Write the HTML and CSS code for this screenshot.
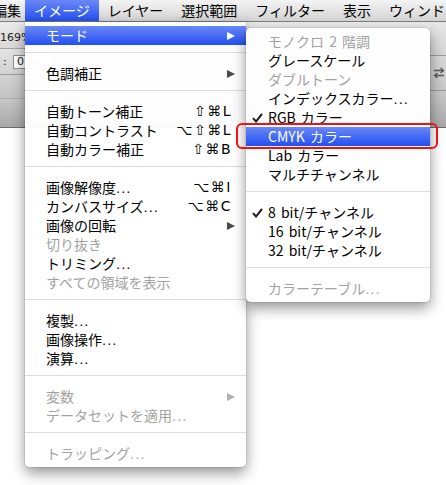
FILE: index.html
```html
<!DOCTYPE html>
<html lang="ja">
<head>
<meta charset="utf-8">
<title>イメージ メニュー</title>
<link rel="stylesheet" href="styles.css">
</head>
<body>
<div class="screen">
  <div class="menubar">
    <span class="mb-item first">編集</span>
    <span class="mb-item active">イメージ</span>
    <span class="mb-item">レイヤー</span>
    <span class="mb-item">選択範囲</span>
    <span class="mb-item">フィルター</span>
    <span class="mb-item">表示</span>
    <span class="mb-item">ウィンドウ</span>
  </div>

  <div class="chrome">
    <div class="chrome-left">
      <div class="appbar"><span class="zoom">169%</span></div>
      <div class="optbar"><span class="colon">:</span><span class="field">0 px</span></div>
      <div class="tabbar"></div>
      <div class="docbar"></div>
    </div>
    <div class="chrome-right">
      <div class="rseg1"></div>
      <div class="rseg2">
        <svg class="swap" width="12" height="12" viewBox="0 0 12 12">
          <path d="M1 3.5H10M7.5 1L10.5 3.5L7.5 6" fill="none" stroke="#5a5a5a" stroke-width="1.3"/>
          <path d="M11 8.5H2M4.5 6L1.5 8.5L4.5 11" fill="none" stroke="#5a5a5a" stroke-width="1.3"/>
        </svg>
      </div>
      <div class="rseg3"></div>
    </div>
  </div>
  <div class="canvas"></div>

  <div class="menu main">
    <div class="item sel"><span class="label">モード</span><span class="arrow"></span></div>
    <div class="sep"></div>
    <div class="item"><span class="label">色調補正</span><span class="arrow"></span></div>
    <div class="sep"></div>
    <div class="item"><span class="label">自動トーン補正</span><span class="key">⇧⌘L</span></div>
    <div class="item"><span class="label">自動コントラスト</span><span class="key">⌥⇧⌘L</span></div>
    <div class="item"><span class="label">自動カラー補正</span><span class="key">⇧⌘B</span></div>
    <div class="sep"></div>
    <div class="item"><span class="label">画像解像度<span class="ell">...</span></span><span class="key">⌥⌘I</span></div>
    <div class="item"><span class="label">カンバスサイズ<span class="ell">...</span></span><span class="key">⌥⌘C</span></div>
    <div class="item"><span class="label">画像の回転</span><span class="arrow"></span></div>
    <div class="item dis"><span class="label">切り抜き</span></div>
    <div class="item"><span class="label">トリミング<span class="ell">...</span></span></div>
    <div class="item dis"><span class="label">すべての領域を表示</span></div>
    <div class="sep"></div>
    <div class="item"><span class="label">複製<span class="ell">...</span></span></div>
    <div class="item"><span class="label">画像操作<span class="ell">...</span></span></div>
    <div class="item"><span class="label">演算<span class="ell">...</span></span></div>
    <div class="sep"></div>
    <div class="item dis"><span class="label">変数</span><span class="arrow"></span></div>
    <div class="item dis"><span class="label">データセットを適用<span class="ell">...</span></span></div>
    <div class="sep"></div>
    <div class="item dis"><span class="label">トラッピング<span class="ell">...</span></span></div>
  </div>

  <div class="menu sub">
    <div class="item dis"><span class="mark"></span><span class="label">モノクロ 2 階調</span></div>
    <div class="item"><span class="mark"></span><span class="label">グレースケール</span></div>
    <div class="item dis"><span class="mark"></span><span class="label">ダブルトーン</span></div>
    <div class="item"><span class="mark"></span><span class="label">インデックスカラー<span class="ell">...</span></span></div>
    <div class="item"><span class="mark"><svg width="11" height="10" viewBox="0 0 11 10"><path d="M1 5.2L4 8.5L10 0.8" fill="none" stroke="#1a1a1a" stroke-width="2"/></svg></span><span class="label">RGB カラー</span></div>
    <div class="item sel"><span class="mark"></span><span class="label">CMYK カラー</span></div>
    <div class="item"><span class="mark"></span><span class="label">Lab カラー</span></div>
    <div class="item"><span class="mark"></span><span class="label">マルチチャンネル</span></div>
    <div class="sep"></div>
    <div class="item"><span class="mark"><svg width="11" height="10" viewBox="0 0 11 10"><path d="M1 5.2L4 8.5L10 0.8" fill="none" stroke="#1a1a1a" stroke-width="2"/></svg></span><span class="label">8 bit/チャンネル</span></div>
    <div class="item"><span class="mark"></span><span class="label">16 bit/チャンネル</span></div>
    <div class="item"><span class="mark"></span><span class="label">32 bit/チャンネル</span></div>
    <div class="sep"></div>
    <div class="item dis"><span class="mark"></span><span class="label">カラーテーブル<span class="ell">...</span></span></div>
  </div>

  <div class="callout"></div>
</div>
</body>
</html>
```

FILE: styles.css
```css
* {
  box-sizing: border-box;
  margin: 0;
  padding: 0;
}

html,
body {
  width: 446px;
  height: 485px;
  overflow: hidden;
  background: #fff;
}

body {
  font-family: "Noto Sans CJK JP", "DejaVu Sans", sans-serif;
  font-size: 14px;
  color: #000;
}

.screen {
  position: relative;
  width: 446px;
  height: 485px;
  overflow: hidden;
  background: #fff;
}

/* ---------- menu bar ---------- */
.menubar {
  display: flex;
  height: 22px;
  margin-left: -16px;
  background: linear-gradient(#f4f4f4, #d3d3d3);
  border-bottom: 1px solid #7c7c7c;
  line-height: 21px;
  white-space: nowrap;
}

.mb-item {
  padding: 0 9px;
}

.mb-item.first {
  padding-right: 4px;
}

.mb-item.active {
  background: linear-gradient(#6a88f7, #2350f1);
  color: #fff;
}

/* ---------- photoshop chrome ---------- */
.chrome {
  display: flex;
  height: 106px;
}

.chrome-left {
  flex: 1;
  display: flex;
  flex-direction: column;
}

.appbar {
  height: 27px;
  padding-top: 3px;
  background: linear-gradient(#ebebeb, #d9d9d9);
  border-bottom: 1px solid #a4a4a4;
  font-family: "DejaVu Sans", sans-serif;
  font-size: 11px;
  line-height: 26px;
  color: #222;
}

.optbar {
  height: 26px;
  display: flex;
  align-items: center;
  padding-left: 3px;
  background: linear-gradient(#e3e3e3, #d3d3d3);
  border-bottom: 1px solid #9e9e9e;
  font-family: "DejaVu Sans", sans-serif;
  font-size: 11px;
  color: #222;
}

.colon {
  width: 10px;
}

.field {
  height: 14px;
  width: 40px;
  background: #fff;
  border: 1px solid #8e8e8e;
  padding-left: 3px;
  line-height: 12px;
}

.tabbar {
  height: 24px;
  background: linear-gradient(#d2d2d2, #c3c3c3);
  border-bottom: 1px solid #adadad;
}

.docbar {
  flex: 1;
  background: linear-gradient(#c7c7c7, #a8a8a8);
  border-bottom: 1px solid #6c6c6c;
}

.chrome-right {
  width: 16px;
  display: flex;
  flex-direction: column;
}

.rseg1 {
  height: 34px;
  background: linear-gradient(#e6e6e6, #d6d6d6);
  border-bottom: 1px solid #9a9a9a;
}

.rseg2 {
  height: 35px;
  display: flex;
  align-items: center;
  padding-left: 3px;
  background: linear-gradient(#d8d8d8, #c8c8c8);
  border-bottom: 1px solid #9a9a9a;
}

.rseg3 {
  flex: 1;
  background: linear-gradient(#c9c9c9, #a9a9a9);
  border-bottom: 1px solid #6c6c6c;
}

.canvas {
  height: 357px;
  background: #fff;
}

/* ---------- menus ---------- */
.menu {
  position: absolute;
  background: rgba(255, 255, 255, 0.97);
  box-shadow: 0 0 0 1px rgba(0, 0, 0, 0.07), 0 6px 14px rgba(0, 0, 0, 0.42);
  padding: 4px 0;
}

.menu.main {
  left: 25px;
  top: 22px;
  width: 221px;
  border-radius: 0 0 5px 5px;
}

.menu.sub {
  left: 246px;
  top: 28px;
  width: 184px;
  border-radius: 5px;
}

.item {
  display: flex;
  align-items: center;
  height: 19px;
  line-height: 19px;
  padding: 0 15px 0 21px;
  white-space: nowrap;
}

.sub .item {
  padding-left: 6px;
}

.mark {
  width: 16px;
  display: flex;
  align-items: center;
}

.label {
  flex: 1;
  word-spacing: 2px;
}

.ell {
  font-family: "DejaVu Sans", sans-serif;
  letter-spacing: 1px;
  font-size: 13px;
}

.key {
  font-family: "DejaVu Sans", sans-serif;
  font-size: 14px;
  letter-spacing: 1.5px;
  margin-right: -1px;
}

.arrow {
  width: 0;
  height: 0;
  border-left: 8px solid #4a4a4a;
  border-top: 4.5px solid transparent;
  border-bottom: 4.5px solid transparent;
  margin-right: -4px;
}

.item.sel {
  background: linear-gradient(#6a88f7, #2350f1);
  color: #fff;
}

.item.sel .arrow {
  border-left-color: #fff;
}

.item.dis {
  color: #a2a2a2;
}

.item.dis .arrow {
  border-left-color: #b0b0b0;
}

.sep {
  height: 1px;
  background: #dcdcdc;
  margin: 7px 0 11px;
}

.callout {
  position: absolute;
  left: 236px;
  top: 123px;
  width: 202px;
  height: 26px;
  border: 2px solid #ee1111;
  border-radius: 6px;
}
```
